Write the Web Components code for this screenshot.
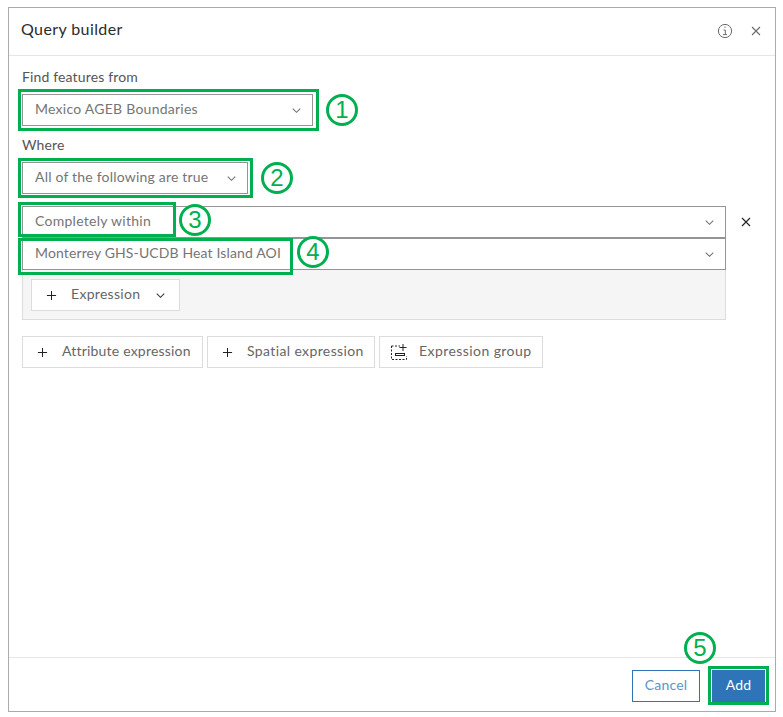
<!DOCTYPE html>
<html>
<head>
<meta charset="utf-8">
<title>Query builder</title>
<style>
  html, body { margin: 0; background: #fff; }
  body { font-family: "Lato", "Open Sans", sans-serif; }
</style>
</head>
<body>
<q-page>
  <q-dialog>
    <span slot="title">Query builder</span>

    <q-label>Find features from</q-label>
    <q-select style="width: 291px; letter-spacing: .25px">Mexico AGEB Boundaries</q-select>
    <q-label style="margin-top: 10px">Where</q-label>
    <q-select style="width: 226px">All of the following are true</q-select>

    <q-expression>
      <q-select style="letter-spacing: .27px">Completely within</q-select>
      <q-select style="letter-spacing: .13px">Monterrey GHS-UCDB Heat Island AOI</q-select>
    </q-expression>

    <q-actions>
      <q-button icon="plus" style="width: 181px">Attribute expression</q-button>
      <q-button icon="plus" style="width: 168px; letter-spacing: .38px">Spatial expression</q-button>
      <q-button icon="group" style="width: 164px">Expression group</q-button>
    </q-actions>

    <q-button slot="footer" variant="outline" style="width: 68px">Cancel</q-button>
    <q-button slot="footer" variant="primary" style="width: 53px">Add</q-button>
  </q-dialog>

  <q-callout box="18,89,301,42" n="1" at="342,110"></q-callout>
  <q-callout box="18,158,235,40" n="2" at="277,178"></q-callout>
  <q-callout box="18,202,158,35" n="3" at="195,220"></q-callout>
  <q-callout box="18,238,275,37" n="4" at="313,252"></q-callout>
  <q-callout box="708,666,61,39" n="5" at="700,648"></q-callout>
</q-page>

<script>
const ICONS = {
  chevron: '<path d="M1 3.5 6 8.5 11 3.5" fill="none" stroke="currentColor" stroke-width="1.4"/>',
  close: '<path d="M2 2 10 10M10 2 2 10" fill="none" stroke="currentColor" stroke-width="1.1"/>',
  plus: '<path d="M6 1V11M1 6H11" fill="none" stroke="currentColor" stroke-width="1.1"/>',
  info: '<circle cx="8" cy="8" r="6.6" fill="none" stroke="currentColor"/><path d="M8 3.6v1.3M6.6 7H8.3V11.6M6 11.6H10" fill="none" stroke="currentColor"/>',
  group: '<path d="M.5 2H9M.5 2V15.5H15.5V12" fill="none" stroke="currentColor" stroke-dasharray="2 1.5"/><path d="M12 0V7M8.5 3.5H15.5" fill="none" stroke="currentColor"/><rect x="4.5" y="9.5" width="9" height="2" fill="none" stroke="currentColor"/>'
};

function icon(name, size, box) {
  return `<svg width="${size}" height="${size}" viewBox="0 0 ${box} ${box}" style="display:block;flex:none">${ICONS[name]}</svg>`;
}

class QPage extends HTMLElement {
  constructor() {
    super();
    this.attachShadow({mode: 'open'}).innerHTML = `
      <style>
        :host { display: block; position: relative; box-sizing: border-box; width: 783px; height: 717px; padding: 7px 7px 5px 8px; }
      </style>
      <slot></slot>`;
  }
}

class QDialog extends HTMLElement {
  constructor() {
    super();
    this.attachShadow({mode: 'open'}).innerHTML = `
      <style>
        :host { display: flex; flex-direction: column; box-sizing: border-box; height: 705px; border: 1px solid #ababab; background: #fff; }
        header { display: flex; align-items: center; height: 48px; box-sizing: border-box; padding: 0 13px 2px 12px; border-bottom: 1px solid #e6e6e6; }
        .title { flex: 1; padding-bottom: 5px; font-size: 16px; letter-spacing: .4px; color: #2b2b2b; }
        .info { color: #6a6a6a; margin-right: 17px; }
        .close { color: #6a6a6a; }
        main { flex: 1; padding: 12px 49px 0 13px; }
        footer { display: flex; justify-content: flex-end; gap: 12px; height: 54px; box-sizing: border-box; padding: 12px 10px 0 0; border-top: 1px solid #e6e6e6; }
      </style>
      <header>
        <div class="title"><slot name="title"></slot></div>
        <div class="info">${icon('info', 16, 16)}</div>
        <div class="close">${icon('close', 12, 12)}</div>
      </header>
      <main><slot></slot></main>
      <footer><slot name="footer"></slot></footer>`;
  }
}

class QLabel extends HTMLElement {
  constructor() {
    super();
    this.attachShadow({mode: 'open'}).innerHTML = `
      <style>
        :host { display: block; box-sizing: border-box; height: 26px; font-size: 14px; line-height: 18px; letter-spacing: .15px; color: #555; }
      </style>
      <slot></slot>`;
  }
}

class QSelect extends HTMLElement {
  constructor() {
    super();
    this.attachShadow({mode: 'open'}).innerHTML = `
      <style>
        :host { display: flex; align-items: center; box-sizing: border-box; height: 32px; padding: 0 11px 0 12px; border: 1px solid #949494; background: #fff; font-size: 14px; letter-spacing: .2px; color: #757575; }
        .text { flex: 1; white-space: nowrap; padding-bottom: 4px; }
        .arrow { color: #707070; }
      </style>
      <div class="text"><slot></slot></div>
      <div class="arrow">${icon('chevron', 9, 12)}</div>`;
  }
}

class QExpression extends HTMLElement {
  constructor() {
    super();
    this.attachShadow({mode: 'open'}).innerHTML = `
      <style>
        :host { display: block; position: relative; margin-top: 12px; }
        .panel { box-sizing: border-box; height: 50px; padding: 9px 8px; background: #f5f5f5; border: 1px solid #dcdcdc; border-top: 0; }
        .remove { position: absolute; left: 718px; top: 10px; color: #222; }
      </style>
      <slot></slot>
      <div class="remove">${icon('close', 12, 12)}</div>
      <div class="panel"><q-button icon="plus" menu style="width: 149px; letter-spacing: .3px">Expression</q-button></div>`;
  }
}

class QActions extends HTMLElement {
  constructor() {
    super();
    this.attachShadow({mode: 'open'}).innerHTML = `
      <style>
        :host { display: flex; gap: 4px; margin-top: 16px; }
      </style>
      <slot></slot>`;
  }
}

class QButton extends HTMLElement {
  constructor() {
    super();
    const lead = this.getAttribute('icon');
    const size = lead === 'group' ? 16 : 11;
    const box = lead === 'group' ? 16 : 12;
    this.attachShadow({mode: 'open'}).innerHTML = `
      <style>
        :host { display: inline-flex; align-items: center; box-sizing: border-box; height: 32px; padding: 0 12px 0 14px; gap: 14px; border: 1px solid #dcdcdc; background: #fff; font-size: 14px; letter-spacing: .2px; color: #666; white-space: nowrap; }
        :host([icon="group"]) { padding-left: 11px; gap: 12px; letter-spacing: .43px; }
        :host([variant="outline"]) { justify-content: center; padding: 0; border-color: #2e74b8; color: #5b94cc; }
        :host([variant="primary"]) { justify-content: center; padding: 0; border-color: #2e74b8; background: #2e74b8; color: #fff; }
        .label { padding-bottom: 4px; }
        .lead { color: #222; }
        .menu { color: #333; margin-left: 2px; }
      </style>
      ${lead ? `<div class="lead">${icon(lead, size, box)}</div>` : ''}
      <div class="label"><slot></slot></div>
      ${this.hasAttribute('menu') ? `<div class="menu">${icon('chevron', 9, 12)}</div>` : ''}`;
  }
}

// the green annotations sit on top of the finished dialog
class QCallout extends HTMLElement {
  constructor() {
    super();
    const [x, y, w, h] = this.getAttribute('box').split(',');
    const [cx, cy] = this.getAttribute('at').split(',').map(Number);
    this.attachShadow({mode: 'open'}).innerHTML = `
      <style>
        :host { display: contents; }
        .frame { position: absolute; box-sizing: border-box; left: ${x}px; top: ${y}px; width: ${w}px; height: ${h}px; border: 3px solid #00b050; }
        .num { position: absolute; box-sizing: border-box; left: ${cx - 16}px; top: ${cy - 16}px; width: 32px; height: 32px; border: 3px solid #00b050; border-radius: 50%; background: #fff; display: flex; align-items: center; justify-content: center; font-family: "Liberation Sans", sans-serif; font-size: 24px; color: #00b050; }
      </style>
      <div class="frame"></div>
      <div class="num">${this.getAttribute('n')}</div>`;
  }
}

customElements.define('q-button', QButton);
customElements.define('q-select', QSelect);
customElements.define('q-label', QLabel);
customElements.define('q-expression', QExpression);
customElements.define('q-actions', QActions);
customElements.define('q-dialog', QDialog);
customElements.define('q-callout', QCallout);
customElements.define('q-page', QPage);
</script>
</body>
</html>
